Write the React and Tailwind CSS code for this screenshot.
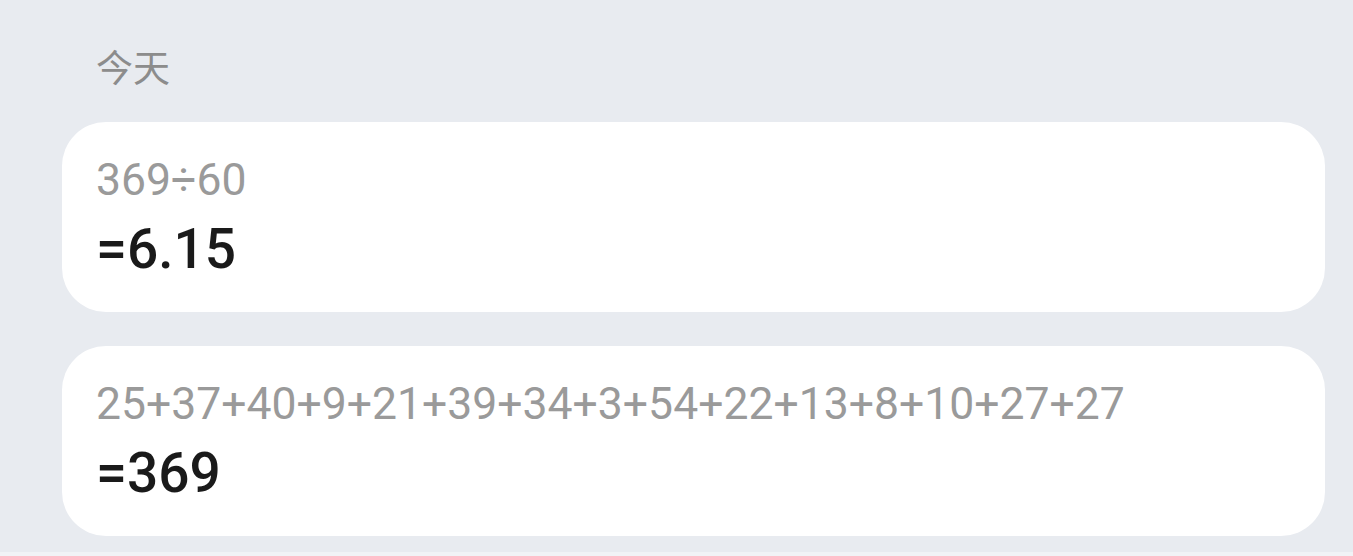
import React from 'react'

const history = [
    { expr: '369÷60', result: '6.15' },
    { expr: '25+37+40+9+21+39+34+3+54+22+13+8+10+27+27', result: '369' }
]

export default function App() {
    return (
        <div className="w-[1353px] h-[556px] bg-[#e8ebf0] flex flex-col overflow-hidden font-['Roboto','Noto_Sans_CJK_SC',sans-serif]">
            <div className="flex-1 pl-[62px] pr-[28px]">
                {/* Section label */}
                <div className="pt-[48px] pl-[34px] h-[84px] text-[37px] leading-[36px] text-[#8c8c8c] font-['Noto_Sans_CJK_SC',sans-serif]">
                    今天
                </div>

                <div className="mt-[38px] flex flex-col gap-[34px]">
                    {history.map((item, i) => (
                        <div
                            key={i}
                            className="bg-white rounded-[44px] h-[190px] pl-[34px] pr-8 pt-[30px] pb-[28px] flex flex-col"
                        >
                            <div className="text-[44.5px] leading-[56px] text-[#9a9a9a] whitespace-nowrap">
                                {item.expr}
                            </div>
                            <div className="mt-[6px] text-[55px] leading-[70px] font-medium text-[#1a1a1a] whitespace-nowrap">
                                ={item.result}
                            </div>
                        </div>
                    ))}
                </div>
            </div>
            <div className="h-[4px] bg-[#f1f3f6]"></div>
        </div>
    )
}
